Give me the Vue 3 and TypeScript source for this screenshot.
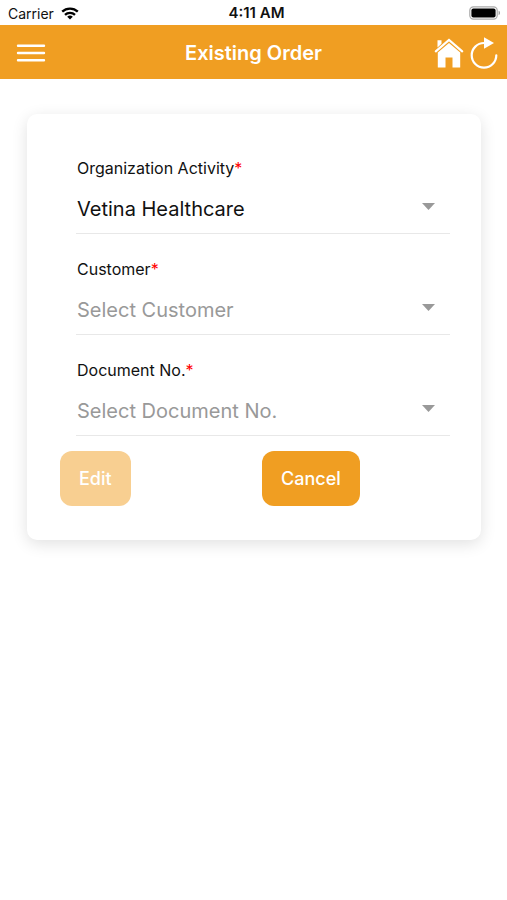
<script setup lang="ts">
import { ref } from 'vue'

interface Field {
  id: string
  label: string
  placeholder: string
  options: string[]
  value: string
}

const fields = ref<Field[]>([
  {
    id: 'organization',
    label: 'Organization Activity',
    placeholder: '',
    options: ['Vetina Healthcare'],
    value: 'Vetina Healthcare',
  },
  { id: 'customer', label: 'Customer', placeholder: 'Select Customer', options: [], value: '' },
  { id: 'document', label: 'Document No.', placeholder: 'Select Document No.', options: [], value: '' },
])
</script>

<template>
  <div class="screen">
    <div class="status">
      <div class="carrier">
        <span>Carrier</span>
        <svg width="18" height="13" viewBox="0 0 18 13" aria-hidden="true">
          <g fill="none" stroke="#000" stroke-width="2.3">
            <path d="M1.2 4.7a11.2 11.2 0 0 1 15.6 0" />
            <path d="M4 7.8a7.2 7.2 0 0 1 10 0" />
          </g>
          <path d="M9 12.6 6.2 9.8a4 4 0 0 1 5.6 0z" />
        </svg>
      </div>
      <span class="time">4:11 AM</span>
      <div class="battery">
        <svg width="33" height="14" viewBox="0 0 33 14" aria-hidden="true">
          <rect x="1.8" y="0.8" width="27.4" height="12.4" rx="3.6" fill="#fff" stroke="#aaa" stroke-width="1.2" />
          <rect x="3.4" y="2.4" width="24.2" height="9.2" rx="2" />
          <path d="M30.6 4.8c1.800 .6 1.800 3.800 0 4.400z" fill="#999" />
        </svg>
      </div>
    </div>

    <header class="bar">
      <div class="side start">
        <button class="icon" type="button" aria-label="Menu">
          <svg width="30" height="20" viewBox="0 0 30 20">
            <path d="M2 2.800H28M2 10H28M2 17.200H28" stroke="#fff" stroke-width="2.400" stroke-linecap="round" />
          </svg>
        </button>
      </div>
      <h1>Existing Order</h1>
      <div class="side end">
        <button class="icon" type="button" aria-label="Home">
          <svg width="30" height="30" viewBox="0 0 30 30">
            <path d="M3.500 9.500V2.300H7.500V5.800z" fill="#fff" />
            <path d="M1.800 13.400 15 2 28.200 13.400" fill="none" stroke="#fff" stroke-width="2.200" stroke-linecap="round" />
            <path d="M3.800 14.400 15 4.900 26.200 14.400V29.500H18.500V19.500H11.500V29.500H3.800z" fill="#fff" />
          </svg>
        </button>
        <button class="icon" type="button" aria-label="Refresh">
          <svg width="28" height="32" viewBox="0 0 28 32">
            <path d="M26.300 18.300A12.300 12.300 0 1 1 14 6H16" fill="none" stroke="#fff" stroke-width="2.200" stroke-linecap="round" />
            <path d="M14 .2 24 6 14 11.800z" fill="#fff" />
          </svg>
        </button>
      </div>
    </header>

    <main>
      <form class="card" @submit.prevent>
        <div class="fields">
          <div v-for="field in fields" :key="field.id" class="field">
            <label :for="field.id">{{ field.label }}<span class="required">*</span></label>
            <div class="control">
              <select :id="field.id" v-model="field.value" :class="{ empty: !field.value }" required>
                <option v-if="field.placeholder" value="" disabled>{{ field.placeholder }}</option>
                <option v-for="option in field.options" :key="option" :value="option">{{ option }}</option>
              </select>
              <svg class="arrow" width="13" height="7" viewBox="0 0 13 7" aria-hidden="true">
                <path d="M0 0H13L6.500 7z" />
              </svg>
            </div>
          </div>
        </div>
        <div class="actions">
          <div><button class="action" type="submit" disabled>Edit</button></div>
          <div><button class="action" type="button">Cancel</button></div>
        </div>
      </form>
    </main>
  </div>
</template>

<style>
body {
  background: #fff;
}
</style>

<style scoped>
.screen {
  font-family: Inter, "Liberation Sans", sans-serif;
  color: #111;
}
.status {
  display: grid;
  grid-template-columns: 1fr auto 1fr;
  align-items: center;
  height: 25px;
  padding: 1px 2px 0 8px;
  box-sizing: border-box;
  font-size: 14px;
}
.carrier {
  display: flex;
  align-items: center;
  gap: 7px;
}
.time {
  font-size: 15px;
  line-height: 18px;
  font-weight: 600;
}
.battery {
  display: flex;
  justify-content: flex-end;
  padding-right: 4px;
}
.bar {
  display: grid;
  grid-template-columns: 1fr auto 1fr;
  align-items: center;
  box-sizing: border-box;
  height: 54px;
  padding: 2px 9px 0;
  background: #f09e22;
}
h1 {
  margin: 0;
  font-size: 20px;
  font-weight: 600;
  line-height: 24px;
  color: #fff;
}
.side {
  display: flex;
  align-items: center;
  gap: 6px;
}
.start {
  padding-left: 7px;
}
.end {
  justify-content: flex-end;
}
.icon {
  display: flex;
  padding: 0;
  border: 0;
  background: none;
}
main {
  padding: 35px 26px 35px 27px;
}
.card {
  padding: 44px 31px 34px 33px;
  border-radius: 10px;
  background: #fff;
  box-shadow: 0 4px 16px rgba(0, 0, 0, 0.12);
}
.fields {
  display: flex;
  flex-direction: column;
  gap: 25px;
  padding-left: 16px;
}
.field {
  display: flex;
  flex-direction: column;
}
label {
  font-size: 16px;
  line-height: 20px;
  padding-left: 1px;
}
.required {
  color: #f00;
}
.control {
  display: grid;
  align-items: center;
}
select {
  grid-area: 1 / 1;
  width: 100%;
  height: 56px;
  margin: 0;
  padding: 6px 36px 0 1px;
  border: 0;
  border-bottom: 1px solid #e8e8e8;
  border-radius: 0;
  background: none;
  appearance: none;
  font-family: inherit;
  font-size: 20px;
  color: #111;
  opacity: 1;
}
select.empty {
  color: #999;
}
.arrow {
  grid-area: 1 / 1;
  justify-self: end;
  margin-right: 15px;
  fill: #999;
  pointer-events: none;
}
.actions {
  display: grid;
  grid-template-columns: 1fr 1fr;
  gap: 14px;
  padding-top: 15px;
}
.action {
  height: 55px;
  padding: 0 19px;
  border: 0;
  border-radius: 12px;
  background: #f09e22;
  font-family: inherit;
  font-size: 18px;
  font-weight: 500;
  color: #fff;
  display: block;
}
.action:disabled {
  background: #f8cf91;
}
</style>
